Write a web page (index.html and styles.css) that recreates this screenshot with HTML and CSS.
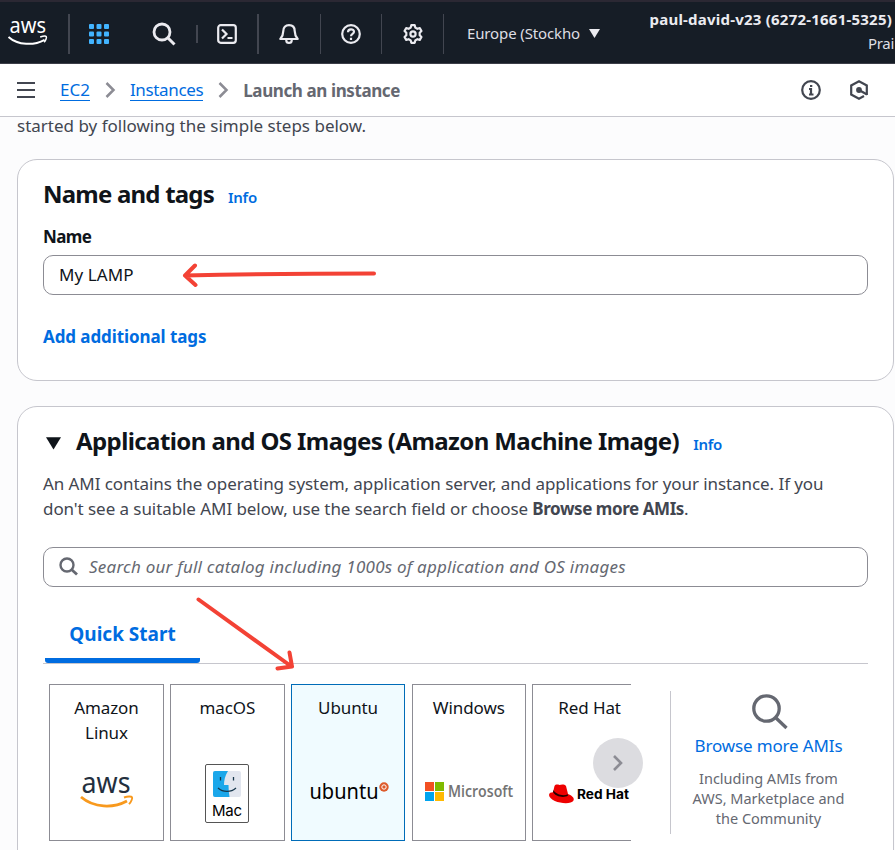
FILE: index.html
```html
<!DOCTYPE html>
<html lang="en">
<head>
<meta charset="utf-8">
<title>Launch an instance</title>
<link rel="stylesheet" href="styles.css">
</head>
<body>
<header class="topbar">
  <div class="cell cell-logo">
    <svg width="42" height="32" viewBox="0 0 42 32">
      <text class="aws-word" x="1.5" y="20" font-size="22" textLength="36.5" lengthAdjust="spacingAndGlyphs">aws</text>
      <path d="M.5 24C10 32.500 26 32.700 36.600 26.800" fill="none" stroke="#fff" stroke-width="2"/>
      <path d="M32.200 24c3-1 5.700-.9 6.100-.3s-.3 3.600-2.200 5.600" fill="none" stroke="#fff" stroke-width="1.500"/>
    </svg>
  </div>
  <div class="cell cell-grid">
    <svg width="20" height="20" fill="#42b4ff"><rect width="5" height="5" rx="1"/><rect x="7.500" width="5" height="5" rx="1"/><rect x="15" width="5" height="5" rx="1"/><rect y="7.500" width="5" height="5" rx="1"/><rect x="7.500" y="7.500" width="5" height="5" rx="1"/><rect x="15" y="7.500" width="5" height="5" rx="1"/><rect y="15" width="5" height="5" rx="1"/><rect x="7.500" y="15" width="5" height="5" rx="1"/><rect x="15" y="15" width="5" height="5" rx="1"/></svg>
  </div>
  <div class="cell cell-search">
    <svg class="line" width="24" height="24"><circle cx="10" cy="10" r="8" stroke-width="2.800"/><path d="M15.500 15.500l7 7" stroke-width="3"/></svg>
  </div>
  <div class="cell cell-shell">
    <svg class="line" width="20" height="20"><rect x="1.200" y="1.200" width="17.600" height="17.600" rx="2.500"/><path d="M5 5.500l4.500 4.500L5 14.500M10.500 14H15.500"/></svg>
  </div>
  <div class="cell cell-bell">
    <svg class="line" width="20" height="20"><path d="M10 1.200c-3.600 0-5.700 2.300-5.700 5.800 0 4-1.200 5.800-3 8h17.400c-1.800-2.200-3-4-3-8 0-3.500-2.100-5.800-5.700-5.800zM7.300 15.500v1c0 3.200 5.400 3.200 5.400 0v-1" stroke-linejoin="round"/></svg>
  </div>
  <div class="cell cell-help">
    <svg class="line" width="20" height="20"><circle cx="10" cy="10" r="8.800"/><path d="M7 8.200c0-3.800 6-3.800 6-.4 0 2.300-3 2-3 4.500M10 13.700v2.300"/></svg>
  </div>
  <div class="cell cell-gear">
    <svg class="line" width="20" height="20"><path stroke-linejoin="round" d="M7.700 3.600L8.300 1.200h3.400l.6 2.400 2.090 1.210 2.380-.68 1.700 2.940-1.780 1.720v2.420l1.780 1.720-1.700 2.940-2.380-.68-2.090 1.210-.6 2.400H8.300l-.6-2.400-2.090-1.210-2.380.68-1.700-2.940 1.780-1.720V8.790L1.530 7.070l1.700-2.940 2.380.68z"/><circle cx="10" cy="10" r="2.600"/></svg>
  </div>
  <div class="cell cell-region">
    <span class="region">Europe (Stockho</span>
    <svg width="11" height="9"><path d="M0 0h11L5.500 9z" fill="#ebebf0"/></svg>
  </div>
  <div class="account">
    <b class="acct">paul-david-v23 (6272-1661-5325)</b>
    <span class="user">Prai</span>
  </div>
</header>

<nav class="crumbs">
  <svg class="menu" width="18" height="16"><path d="M0 1h18M0 8h18M0 15h18" stroke="#424650" stroke-width="2"/></svg>
  <a>EC2</a>
  <svg class="chev" width="11" height="16"><path d="M1.500 1l7 7-7 7" fill="none" stroke="#8c8c94" stroke-width="2.500"/></svg>
  <a class="inst">Instances</a>
  <svg class="chev" width="11" height="16"><path d="M1.500 1l7 7-7 7" fill="none" stroke="#8c8c94" stroke-width="2.500"/></svg>
  <b class="launch">Launch an instance</b>
  <svg class="tool" width="20" height="20"><g fill="none" stroke="#424650" stroke-width="2.200"><circle cx="10" cy="10" r="8.800"/><path d="M8 9h2v5.500M8 14.500h4.500M9 6h2.300"/></g></svg>
  <svg class="tool tool-hex" width="20" height="20"><g fill="none" stroke="#424650" stroke-width="2.200"><path d="M17.800 15V5.500L10 1.300 2.200 5.500v9L10 18.700l5-2.700"/><path d="M10 10l8 4.500"/></g><circle cx="10" cy="10" r="2.900" fill="#424650"/></svg>
</nav>

<main class="page">
  <p class="intro">started by following the simple steps below.</p>

  <section class="card card-name">
    <h2><span class="title-name">Name and tags</span><a class="info">Info</a></h2>
    <label class="label">Name</label>
    <div class="field">My LAMP</div>
    <a class="addtags">Add additional tags</a>
  </section>

  <section class="card card-ami">
    <h2><svg class="tri" width="15" height="13"><path d="M0 .3h15L7.500 12.500z" fill="#0f141a"/></svg><span class="title-ami">Application and OS Images (Amazon Machine Image)</span><a class="info">Info</a></h2>
    <p class="desc">An AMI contains the operating system, application server, and applications for your instance. If you<br>don't see a suitable AMI below, use the search field or choose <b>Browse more AMIs</b>.</p>
    <div class="field search">
      <svg width="20" height="20"><g fill="none" stroke="#656871"><circle cx="8" cy="9" r="6.500" stroke-width="2.400"/><path d="M12.500 13.500l5.500 5" stroke-width="2.800"/></g></svg>
      <i class="placeholder">Search our full catalog including 1000s of application and OS images</i>
    </div>
    <div class="tabs"><div class="tab">Quick Start</div></div>
    <div class="images">
      <div class="strip">
        <div class="tile"><div class="name">Amazon<br>Linux</div>
          <svg class="logo" width="113" height="62"><text class="aws-dark" x="31.500" y="30" font-size="29" textLength="49" lengthAdjust="spacingAndGlyphs">aws</text><path d="M31 34c13 11 32 11.500 46 4" fill="none" stroke="#f8991d" stroke-width="2.800"/><path d="M74 34.500c4-1.500 7.500-1.200 8-.3s-.4 4.300-3 7" fill="none" stroke="#f8991d" stroke-width="1.900"/></svg></div>
        <div class="tile"><div class="name">macOS</div>
          <svg class="logo" width="113" height="62"><rect x="34.500" y="1.500" width="43" height="58" rx="1.500" fill="#fff" stroke="#555"/><rect x="42" y="8" width="28" height="26" rx="2" fill="#e2e6ef"/><path d="M44 8h13c-3 5-4 9-4 14h4.500c0 4 .3 8 1 12H44a2 2 0 0 1-2-2V10a2 2 0 0 1 2-2z" fill="#1ba7ea"/><path d="M49.500 14v3.500M62.500 14v3.500M47 25c5 4.500 13 4.500 18 0" fill="none" stroke="#16364b" stroke-width="1.300"/><text class="mac" x="41" y="52.500" font-size="15" textLength="30">Mac</text></svg></div>
        <div class="tile selected"><div class="name">Ubuntu</div>
          <svg class="logo" width="113" height="62"><text class="ubuntu" x="17.500" y="36" font-size="22" textLength="69" lengthAdjust="spacingAndGlyphs">ubuntu</text><circle cx="92" cy="24" r="4.700" fill="#dd5a2b"/><circle cx="92" cy="24" r="2.200" fill="none" stroke="#fff"/></svg></div>
        <div class="tile"><div class="name">Windows</div>
          <svg class="logo" width="113" height="62"><rect x="12" y="19" width="9" height="9" fill="#f25022"/><rect x="22" y="19" width="9" height="9" fill="#7fba00"/><rect x="12" y="29" width="9" height="9" fill="#00a4ef"/><rect x="22" y="29" width="9" height="9" fill="#ffb900"/><text class="ms" x="35" y="34" font-size="16" textLength="65" lengthAdjust="spacingAndGlyphs">Microsoft</text></svg></div>
        <div class="tile"><div class="name">Red Hat</div>
          <svg class="logo" width="113" height="62"><path d="M21.500 23c1-1.800 3-1.500 5-1 2-.8 5-1 6.500 1l2 8c5 2 6.500 4.500 5.500 6.500-3 5.500-24 2-24.500-5.500 0-2 2-2.700 4-2.700z" fill="#e00"/><path d="M20 29c2 4.500 11 6.500 15 3.500l-.3-1.300c-4 2.300-12 .3-14.200-4.200z" fill="#200"/><text class="rh" x="44" y="36" font-size="13" textLength="52" lengthAdjust="spacingAndGlyphs">Red Hat</text></svg></div>
      </div>
      <div class="next"><svg width="12" height="18"><path d="M2 2l7 7-7 7" fill="none" stroke="#8c8c94" stroke-width="2.600"/></svg></div>
      <div class="browse">
        <svg class="lens" width="36" height="36"><g fill="none" stroke="#656871"><circle cx="14.500" cy="14.500" r="12.700" stroke-width="3.300"/><path d="M23.500 23.500l11 10.500" stroke-width="3.300"/></g></svg>
        <a>Browse more AMIs</a>
        <p>Including AMIs from<br>AWS, Marketplace and<br>the Community</p>
      </div>
    </div>
  </section>
</main>

<svg class="arrows" width="895" height="850"><g fill="none" stroke="#f34235" stroke-width="4" stroke-linecap="round" stroke-linejoin="round"><path d="M374 273.500C310 273.500 250 274 185 275.500M195 265.500l-10 10 10.500 9.500"/><path d="M198.500 599.500l93 67M289.500 652.500l2.500 14-14.500 2"/></g></svg>
</body>
</html>
```
FILE: styles.css
```css
* { box-sizing: border-box; }
body { margin: 0; height: 850px; overflow: hidden; position: relative; background: #fcfcfd; font-family: "Noto Sans", sans-serif; font-size: 17px; line-height: 25px; color: #0f141a; white-space: nowrap; }
svg { display: block; flex: none; overflow: visible; }
h2, p { margin: 0; }
.topbar { height: 64px; display: flex; align-items: center; background: #161d26; border-top: 2px solid #2b2833; border-bottom: 1px solid #3c3e48; padding-top: 2px; }
.cell { height: 40px; display: flex; align-items: center; justify-content: center; border-right: 1px solid #424650; }
.line { fill: none; stroke: #ebebf0; stroke-width: 2.2; }
.cell-logo { width: 70px; justify-content: flex-start; padding: 0 0 10px 8px; border-right-width: 2px; }
.cell-grid { width: 58px; border: 0; }
.cell-search { width: 70px; height: 18px; padding-left: 4px; border-right-width: 2px; }
.cell-shell { width: 61px; padding-right: 2px; border-right-width: 2px; }
.cell-bell { width: 62px; padding-right: 2px; }
.cell-help { width: 61px; }
.cell-gear { width: 62px; }
.cell-region { border: 0; padding-left: 23px; gap: 9px; }
.region { font-size: 15px; letter-spacing: -0.13px; color: #dedee3; }
.account { margin-left: auto; height: 60px; display: flex; flex-direction: column; align-items: flex-end; padding: 3px 3px 0 0; line-height: 24px; font-size: 15px; color: #ebebf0; }
.acct { font-size: 15px; letter-spacing: 0.22px; }
.user { color: #dedee3; letter-spacing: -0.3px; margin-right: -2px; }
.aws-word { fill: #fff; }
.aws-dark { fill: #232f3e; }
.crumbs { height: 53px; display: flex; align-items: center; background: #fff; border-bottom: 1px solid #c6c6cd; padding: 0 26px 0 17px; }
.crumbs a { color: #006ce0; border-bottom: 1px solid #006ce0; line-height: 21px; }
.menu { margin-right: 25px; }
.chev { margin: 0 14px 0 15px; }
.inst { letter-spacing: -0.35px; }
.launch { color: #656871; letter-spacing: -0.4px; }
.tool { margin-left: auto; }
.tool-hex { margin-left: 28px; }
.page { padding-left: 17px; }
.intro { height: 42px; line-height: 18px; color: #424650; }
.card { width: 877px; border: 1px solid #c6c6cd; border-radius: 20px; background: #fff; padding: 19px 25px 0; }
.card-name { height: 222px; margin-bottom: 25px; }
.card-ami { height: 480px; }
h2 { font-size: 24px; line-height: 30px; height: 30px; display: flex; align-items: baseline; }
.title-name { letter-spacing: -0.79px; }
.title-ami { letter-spacing: -0.59px; }
.info { font-size: 15px; letter-spacing: -0.24px; color: #006ce0; margin-left: 14px; font-weight: 600; }
.label { display: block; margin-top: 15px; font-weight: 700; letter-spacing: -0.65px; }
.field { height: 40px; margin-top: 6px; border: 1px solid #8c8c94; border-radius: 10px; background: #fff; padding: 0 15px 2px; display: flex; align-items: center; letter-spacing: 0.1px; }
.addtags { display: block; margin-top: 29px; font-weight: 700; letter-spacing: -0.09px; color: #006ce0; }
.tri { margin: 0 15px 0 3px; }
.desc { margin-top: 15px; color: #424650; letter-spacing: -0.07px; }
.desc b { letter-spacing: -0.43px; }
.search { margin-top: 26px; gap: 10px; color: #656871; }
.placeholder { letter-spacing: 0.23px; }
.tabs { height: 55px; margin-top: 22px; border-bottom: 1px solid #c6c6cd; display: flex; }
.tab { margin-left: 2px; width: 155px; height: 54px; border-bottom: 5px solid #006ce0; border-radius: 0 0 3px 3px; text-align: center; font-size: 19px; line-height: 50px; font-weight: 700; color: #006ce0; }
.images { display: flex; margin-top: 20px; position: relative; padding-left: 6.2px; }
.strip { width: 581.8px; display: flex; gap: 6.2px; overflow: hidden; }
.tile { flex: none; width: 114.6px; height: 157px; border: 1px solid #8c8c94; background: #fff; text-align: center; padding-top: 10px; letter-spacing: -0.1px; }
.selected { border-color: #006cb8; background: #f0fbff; }
.name { height: 68px; }
.logo { letter-spacing: 0; }
.mac { font-family: Inter, sans-serif; fill: #000; }
.ubuntu { fill: #000; }
.ms { font-family: "Open Sans", sans-serif; font-weight: 600; fill: #737373; }
.rh { font-family: Inter, sans-serif; font-weight: 700; fill: #000; }
.next { position: absolute; left: 550px; top: 54px; width: 50px; height: 50px; border-radius: 50%; background: #dcdce0; display: flex; align-items: center; justify-content: center; }
.browse { margin: 7px 0 0 39px; height: 143px; width: 196px; border-left: 1px solid #c6c6cd; display: flex; flex-direction: column; align-items: center; text-align: center; padding-top: 3px; }
.lens { margin-left: 4px; }
.browse a { color: #006ce0; margin-top: 3px; letter-spacing: -0.14px; }
.browse p { color: #656871; font-size: 14.5px; line-height: 20px; margin-top: 10px; }
.arrows { position: absolute; left: 0; top: 0; pointer-events: none; }
```
